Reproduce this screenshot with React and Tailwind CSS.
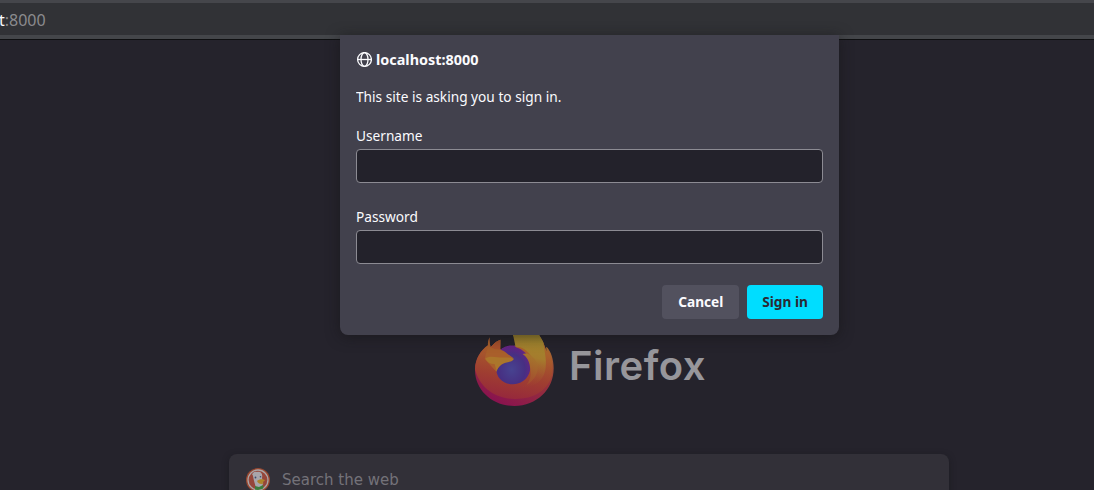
function FirefoxLogo() {
  return (
    <svg className="h-[82px] w-[79px] shrink-0" viewBox="45 0 237 246">
      <defs>
        <linearGradient id="body" x1="0.6" y1="0" x2="0.4" y2="1">
          <stop offset="0" stopColor="#a97c2c" />
          <stop offset="0.35" stopColor="#a95f2b" />
          <stop offset="0.7" stopColor="#9f3e31" />
          <stop offset="1" stopColor="#96283c" />
        </linearGradient>
        <linearGradient id="rim" x1="0.8" y1="0" x2="0.3" y2="1">
          <stop offset="0" stopColor="#a68230" />
          <stop offset="0.5" stopColor="#983539" />
          <stop offset="1" stopColor="#881150" />
        </linearGradient>
        <linearGradient id="tail" x1="0.5" y1="0" x2="0.4" y2="1">
          <stop offset="0" stopColor="#9f8e2e" />
          <stop offset="0.5" stopColor="#a57c2d" />
          <stop offset="1" stopColor="#a3452f" stopOpacity="0" />
        </linearGradient>
        <linearGradient id="flame" x1="0.6" y1="0" x2="0.4" y2="1">
          <stop offset="0" stopColor="#a5792c" />
          <stop offset="1" stopColor="#a3482f" />
        </linearGradient>
        <radialGradient id="globe" cx="0.45" cy="0.62" r="0.65">
          <stop offset="0" stopColor="#474390" />
          <stop offset="0.6" stopColor="#472f82" />
          <stop offset="1" stopColor="#6d2185" />
        </radialGradient>
      </defs>
      <path d="M89 37C85 46 83 54 84 61C62 77 46 101 45 133C44 194 96 243 163 243C230 243 281 194 281 130C281 103 272 76 259 65L260 80L249 50C241 36 231 20 217 0H166C157 14 157 38 164 62L121 73V44C108 49 99 58 92 67C89 58 88 48 89 37Z" fill="url(#rim)" />
      <path d="M89 37C85 46 83 54 84 61C62 77 46 101 45 133C58 184 101 221 163 222C221 223 262 198 276 151C281 111 272 80 259 65L260 80L249 50C241 36 231 20 217 0H166C157 14 157 38 164 62L121 73V44C108 49 99 58 92 67C89 58 88 48 89 37Z" fill="url(#body)" />
      <path d="M166 0C156 18 158 45 166 65C184 64 200 74 211 90C230 109 237 135 219 160C210 173 196 183 176 188C222 191 254 167 257 127C260 98 252 72 249 50C241 36 231 20 217 0Z" fill="url(#tail)" />
      <path d="M121 73C135 61 149 58 166 62L160 34L124 40Z" fill="#25232c" />
      <path d="M121 74C134 63 148 60 164 62L168 67C190 74 209 90 211 115C216 148 193 178 160 178C128 178 107 156 109 129C111 112 123 105 137 110Z" fill="url(#globe)" />
      <path d="M92 67C99 58 108 49 121 44V74L104 72Z" fill="#a8512c" />
      <path d="M188 87C195 84 204 85 212 91C232 103 238 129 228 151C221 164 212 173 200 179C214 161 213 144 210 126C208 108 201 97 188 87Z" fill="url(#flame)" />
      <path d="M84 61L92 67L104 72L121 74C133 76 143 88 160 99L137 110C123 117 114 125 109 140L74 102Z" fill="#a95f2b" />
      <path d="M76 101C82 94 99 94 113 97C129 99 144 95 162 101C157 111 146 110 137 113C124 117 114 125 109 140C109 130 105 124 104 117C92 118 82 112 76 101Z" fill="#ab762b" />
    </svg>
  );
}

function DuckIcon() {
  return (
    <svg className="size-6 shrink-0" viewBox="0 0 24 24">
      <defs>
        <clipPath id="disc"><circle cx="12" cy="12" r="10" /></clipPath>
      </defs>
      <circle cx="12" cy="12" r="12" fill="#99472f" />
      <circle cx="12" cy="12" r="10" fill="#96463a" stroke="#aaa5a6" strokeWidth="1.3" />
      <g clipPath="url(#disc)">
        <path d="M7 8C6 5 8 3 11 4C15 3 17 6 16 10L17 14L16 24H11C10 19 8 14 7 8Z" fill="#a8a5aa" />
        <path d="M6 6L9 4L11 6L8 9Z" fill="#a8a5aa" />
        <circle cx="9.5" cy="9.5" r="0.9" fill="#394b70" />
        <circle cx="14.5" cy="8.8" r="0.8" fill="#394b70" />
        <path d="M11 13C13 11 17 11 19 12C18 14 15 14 18 15C16 17 12 16 11 13Z" fill="#ae8429" />
        <path d="M9 18L13 19L17 17L18 22H9Z" fill="#3c7e3b" />
      </g>
    </svg>
  );
}

function GlobeIcon() {
  return (
    <svg className="size-4 shrink-0" viewBox="0 0 16 16" fill="none" stroke="#fbfbfe" strokeWidth="1.3">
      <circle cx="8.5" cy="7.5" r="6.9" />
      <ellipse cx="8.5" cy="7.5" rx="3.5" ry="6.9" />
      <path d="M1.6 7.5H15.4" />
    </svg>
  );
}

function Field({ label, type }) {
  return (
    <label className="flex flex-col">
      <span className="h-[27px] origin-left scale-x-[0.912] leading-[26px]">{label}</span>
      <input type={type} className="h-[34px] w-full rounded-[4px] border border-[#8c8b93] bg-[#23222b] px-2 outline-none" />
    </label>
  );
}

function SignInDialog() {
  return (
    <section className="absolute top-[35px] left-[340px] flex h-[300px] w-[499px] flex-col rounded-b-[8px] bg-[#42414d] px-4 pt-4 font-['Noto_Sans',sans-serif] text-[15px] text-[#fbfbfe] shadow-[0_2px_14px_rgba(20,20,22,0.6)]">
      <header className="flex h-[17px] items-center gap-1">
        <GlobeIcon />
        <h1 className="origin-left scale-x-[0.96] leading-[17px] font-bold">localhost:8000</h1>
      </header>
      <p className="mt-[18px] h-[21px] origin-left scale-x-[0.912] leading-5">This site is asking you to sign in.</p>
      <form className="mt-[15px] flex flex-col gap-5">
        <Field label="Username" type="text" />
        <Field label="Password" type="password" />
        <div className="mt-px flex justify-end gap-2">
          <button type="button" className="h-[34px] w-[77px] rounded-[4px] bg-[#52515e] pb-0.5 font-bold">
            <span className="inline-block scale-x-[0.912]">Cancel</span>
          </button>
          <button type="button" className="h-[34px] w-[76px] rounded-[4px] bg-[#00ddff] pb-0.5 font-bold text-[#2b2a33]">
            <span className="inline-block scale-x-[0.912]">Sign in</span>
          </button>
        </div>
      </form>
    </section>
  );
}

export default function App() {
  return (
    <div className="relative flex h-[490px] w-[1094px] flex-col overflow-hidden bg-[#25232c]">
      <nav className="h-10 shrink-0 border-t-[3px] border-b border-t-[#45464b] border-b-[#0e0f11] bg-[#44464a]">
        <div className="h-8 bg-[#313236] font-['Noto_Sans',sans-serif] text-[16px] leading-[34px] text-[#8b8b8e]">
          <span className="-ml-px text-[#fbfbfe]">t</span>:8000
        </div>
      </nav>
      <main className="flex flex-col items-center pt-[285px] pl-[84px]">
        <div className="flex h-[82px] gap-[15px] pl-0.5">
          <FirefoxLogo />
          <span className="w-[136px] pt-[17px] font-['Inter',sans-serif] text-[40px] leading-[48px] font-semibold tracking-[0.5px] whitespace-nowrap text-[#97969b]">Firefox</span>
        </div>
        <div className="mt-[47px] flex h-[52px] w-[720px] items-center gap-3 rounded-lg bg-[#323038] pl-[17px] font-['DejaVu_Sans',sans-serif] text-[15px] text-[#747279] shadow-[0_2px_6px_rgba(20,20,24,0.5)]">
          <DuckIcon />
          <span>Search the web</span>
        </div>
      </main>
      <SignInDialog />
    </div>
  );
}
